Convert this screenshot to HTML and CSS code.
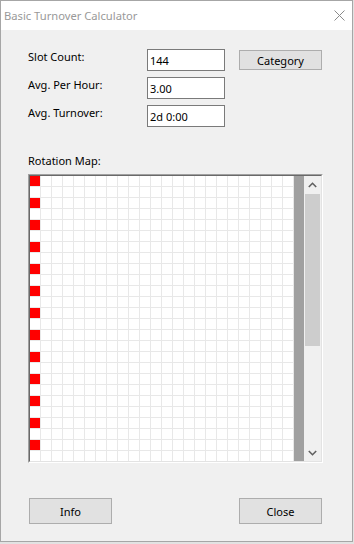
FILE: index.html
```html
<!DOCTYPE html>
<html lang="en">
<head>
    <meta charset="UTF-8">
    <meta name="viewport" content="width=device-width, initial-scale=1.0">
    <title>Basic Turnover Calculator</title>
    <link rel="stylesheet" href="styles.css">
</head>
<body>
    <div class="window">
        <div class="titlebar">
            <span class="title">Basic Turnover Calculator</span>
            <svg class="close-x" width="11" height="11" viewBox="0 0 11 11">
                <path d="M0.5 0.5 L10.5 10.5 M10.5 0.5 L0.5 10.5" stroke="#8a8a8a" stroke-width="1" fill="none"/>
            </svg>
        </div>

        <div class="content">
            <div class="fields">
                <label class="field-label">Slot Count:</label>
                <input class="field-box" type="text" value="144">
                <button class="btn btn-category">Category</button>

                <label class="field-label">Avg. Per Hour:</label>
                <input class="field-box" type="text" value="3.00">
                <span></span>

                <label class="field-label">Avg. Turnover:</label>
                <input class="field-box" type="text" value="2d 0:00">
                <span></span>
            </div>

            <div class="map-label">Rotation Map:</div>
            <div class="map">
                <div class="map-inner">
                    <div class="map-grid">
                        <div class="map-slots"></div>
                    </div>
                    <div class="map-bar"></div>
                    <div class="scrollbar">
                        <div class="scroll-arrow">
                            <svg width="9" height="6" viewBox="0 0 9 6"><path d="M0.8 5 L4.5 1.3 L8.2 5" stroke="#606060" stroke-width="1.6" fill="none"/></svg>
                        </div>
                        <div class="scroll-track"><div class="scroll-thumb"></div></div>
                        <div class="scroll-arrow">
                            <svg width="9" height="6" viewBox="0 0 9 6"><path d="M0.8 1 L4.5 4.7 L8.2 1" stroke="#606060" stroke-width="1.6" fill="none"/></svg>
                        </div>
                    </div>
                </div>
            </div>

            <div class="actions">
                <button class="btn btn-big">Info</button>
                <button class="btn btn-big">Close</button>
            </div>
        </div>
    </div>
</body>
</html>
```

FILE: styles.css
```css
body {margin: 0; background-color: #e2e2e2; font-family: "Noto Sans", "Open Sans", sans-serif; font-size: 11px; color: #000;}
.window {width: 353px; height: 542px; border: 1px solid #a6a6a6; box-sizing: border-box; background-color: #f0f0f0;}
.titlebar {height: 29px; background-color: #fff; display: flex; align-items: center; padding: 0 7px 0 3px;}
.title {font-size: 11.2px; color: #999;}
.close-x {margin-left: auto;}
.content {padding: 19px 30px 0 27px;}
.fields {display: grid; grid-template-columns: 119px 78px 97px; grid-auto-rows: 22px; row-gap: 6px;}
.field-label {line-height: 15px; align-self: start;}
.field-box {width: 78px; height: 22px; box-sizing: border-box; border: 1px solid #7a7a7a; padding: 0 2px; margin: 0; font-family: inherit; font-size: 11px; color: #000; background: #fff; outline: none;}
.btn {font-family: inherit; font-size: 11px; color: #000; background-color: #e1e1e1; border: 1px solid #adadad; border-radius: 0; padding: 0; margin: 0;}
.btn-category {width: 83px; height: 20px; margin-top: 1px; justify-self: end;}
.map-label {margin-top: 26px; line-height: 15px;}
.map {margin-top: 6px; width: 295px; height: 289px; box-sizing: border-box; border: 1px solid; border-color: #a0a0a0 #fff #fff #a0a0a0;}
.map-inner {height: 100%; box-sizing: border-box; border: 1px solid; border-color: #696969 #e3e3e3 #e3e3e3 #696969; display: flex; overflow: hidden;}
.map-grid {width: 264px; flex: none; background-color: #fff; overflow: hidden;
    background-image: linear-gradient(to right, transparent 10px, #e8e8e8 10px), linear-gradient(to bottom, transparent 10px, #e8e8e8 10px);
    background-size: 11px 11px;}
.map-slots {width: 10px; height: 100%; background-image: repeating-linear-gradient(to bottom, #ff0000 0, #ff0000 10px, transparent 10px, transparent 22px);}
.map-bar {width: 10px; flex: none; background-color: #a0a0a0;}
.scrollbar {width: 17px; flex: none; background-color: #f0f0f0; display: flex; flex-direction: column;}
.scroll-arrow {height: 17px; display: flex; align-items: center; justify-content: center;}
.scroll-track {flex: 1; padding: 1px 1px 0 1px;}
.scroll-thumb {height: 152px; background-color: #cdcdcd;}
.actions {margin-top: 35px; padding-left: 1px; display: flex; justify-content: space-between;}
.btn-big {width: 83px; height: 26px;}
```
